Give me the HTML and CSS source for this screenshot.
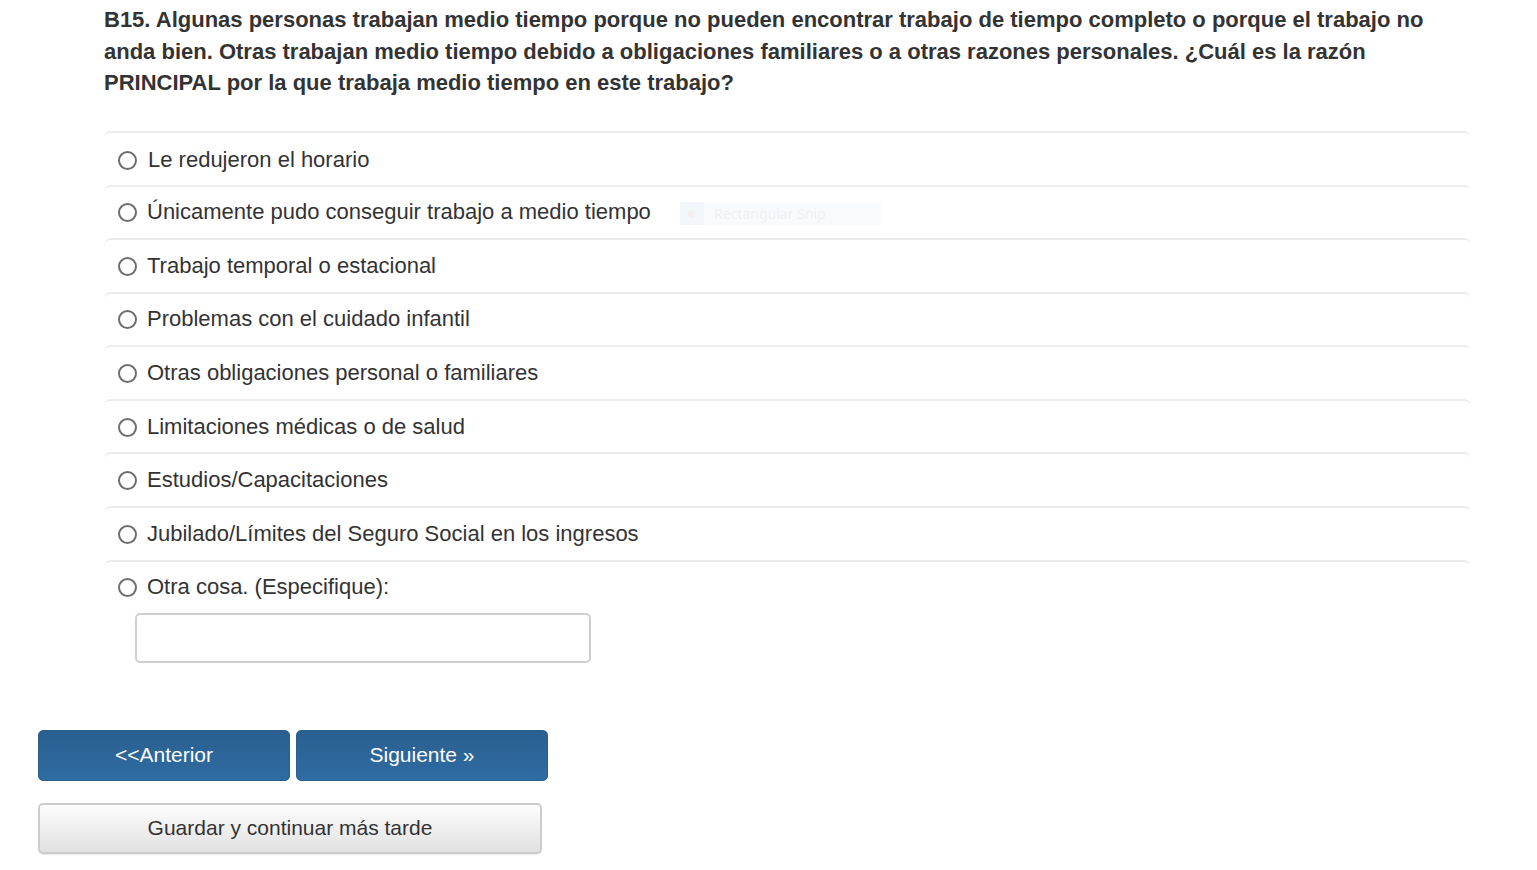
FILE: index.html
```html
<!DOCTYPE html>
<html lang="es">
<head>
<meta charset="utf-8">
<title>B15</title>
<link rel="stylesheet" href="styles.css">
</head>
<body>
<div class="page">
  <div class="question">
    <p class="q-text">B15. Algunas personas trabajan medio tiempo porque no pueden encontrar trabajo de tiempo completo o porque el trabajo no anda bien. Otras trabajan medio tiempo debido a obligaciones familiares o a otras razones personales. ¿Cuál es la razón PRINCIPAL por la que trabaja medio tiempo en este trabajo?</p>
    <div class="options">
      <label class="opt opt-first"><span class="radio"></span><span class="lbl">Le redujeron el horario</span></label>
      <label class="opt"><span class="radio"></span><span class="lbl">Únicamente pudo conseguir trabajo a medio tiempo</span></label>
      <label class="opt"><span class="radio"></span><span class="lbl">Trabajo temporal o estacional</span></label>
      <label class="opt"><span class="radio"></span><span class="lbl">Problemas con el cuidado infantil</span></label>
      <label class="opt"><span class="radio"></span><span class="lbl">Otras obligaciones personal o familiares</span></label>
      <label class="opt"><span class="radio"></span><span class="lbl">Limitaciones médicas o de salud</span></label>
      <label class="opt"><span class="radio"></span><span class="lbl">Estudios/Capacitaciones</span></label>
      <label class="opt"><span class="radio"></span><span class="lbl">Jubilado/Límites del Seguro Social en los ingresos</span></label>
      <div class="opt opt-other">
        <label class="other-line"><span class="radio"></span><span class="lbl">Otra cosa. (Especifique):</span></label>
        <div class="other-input"></div>
      </div>
    </div>
  </div>
  <div class="nav">
    <div class="nav-row">
      <button class="btn btn-primary">&lt;&lt;Anterior</button>
      <button class="btn btn-primary">Siguiente »</button>
    </div>
    <button class="btn btn-save">Guardar y continuar más tarde</button>
  </div>
  <div class="snip"><span class="snip-dot"></span><span class="snip-text">Rectangular Snip</span></div>
</div>
</body>
</html>
```
FILE: styles.css
```css
html, body {
  margin: 0;
  padding: 0;
  background: #fff;
}
body {
  font-family: "Liberation Sans", Arial, sans-serif;
  color: #333;
}
.page {
  position: relative;
  width: 1537px;
  min-height: 870px;
}
.question {
  padding: 4px 66px 0 104px;
}
.q-text {
  margin: 0;
  font-size: 22px;
  font-weight: bold;
  line-height: 31.5px;
  color: #333;
}
.options {
  margin-top: 32px;
  display: flex;
  flex-direction: column;
}
.opt {
  box-sizing: border-box;
  height: 53.6px;
  border-top: 2px solid #ececec;
  border-radius: 7px 7px 0 0;
  display: flex;
  align-items: center;
  padding-left: 14px;
  font-size: 22px;
}
.opt-first {
  height: 54px;
  padding-top: 2px;
}
.radio {
  box-sizing: border-box;
  width: 19px;
  height: 19px;
  border: 2px solid #6e6e6e;
  border-radius: 50%;
  flex: none;
  margin-right: 10px;
  margin-top: 1px;
}
.opt-first .radio { margin-right: 11px; }
.lbl {
  line-height: 26px;
}
.opt-other {
  height: auto;
  flex-direction: column;
  align-items: flex-start;
  padding-top: 12px;
}
.other-line {
  display: flex;
  align-items: center;
}
.other-input {
  box-sizing: border-box;
  margin-top: 13px;
  margin-left: 17px;
  width: 456px;
  height: 50px;
  border: 2px solid #cfcfcf;
  border-radius: 5px;
  background: #fff;
}
.nav {
  padding: 67px 0 0 38px;
  display: flex;
  flex-direction: column;
  align-items: flex-start;
  gap: 22px;
}
.nav-row {
  display: flex;
  gap: 6px;
}
.btn {
  box-sizing: border-box;
  font-family: "Liberation Sans", Arial, sans-serif;
  font-size: 21px;
  height: 51px;
  border-radius: 5px;
  cursor: pointer;
  padding: 0;
}
.btn-primary {
  width: 252px;
  color: #fff;
  border: 1px solid #2a5f8e;
  background: linear-gradient(#2b5f8f, #2e6ca3);
}
.btn-save {
  width: 504px;
  color: #333;
  border: 2px solid #cccccc;
  background: linear-gradient(#fdfdfd, #e1e1e1);
  box-shadow: 0 1px 1px rgba(0,0,0,0.08);
}
.snip {
  position: absolute;
  left: 680px;
  top: 202px;
  width: 201px;
  height: 23px;
  background: #f8fbfe;
  display: flex;
  align-items: center;
}
.snip-dot {
  width: 24px;
  height: 23px;
  background: #f3f7fc;
  position: relative;
  margin-right: 10px;
}
.snip-dot::after {
  content: "";
  position: absolute;
  left: 8px;
  top: 8px;
  width: 7px;
  height: 7px;
  border-radius: 50%;
  background: #f3eef0;
}
.snip-text {
  font-family: "Noto Sans", sans-serif;
  font-size: 14px;
  color: #eef1f4;
}
```
